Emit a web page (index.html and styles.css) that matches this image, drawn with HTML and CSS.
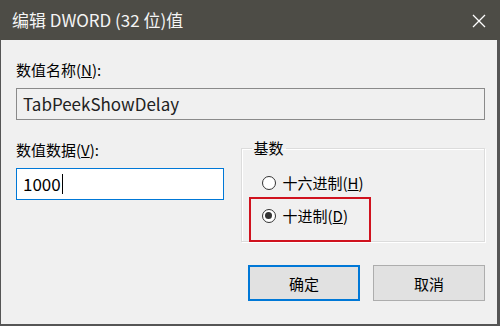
FILE: index.html
```html
<!DOCTYPE html>
<html>
	<head>
		<title>编辑 DWORD (32 位)值</title>
		<meta charset="utf-8">
		<link rel="stylesheet" href="styles.css">
	</head>
	<body>
	<div class="window">
		<div class="titlebar">
			<span class="title">编辑 DWORD (32 位)值</span>
			<span class="close">
				<svg width="14" height="14" viewBox="0 0 14 14"><path d="M1 1 L13 13 M13 1 L1 13" stroke="#fff" stroke-width="1.3" fill="none"/></svg>
			</span>
		</div>
		<div class="content">
			<div class="label">数值名称(<u>N</u>):</div>
			<div class="field readonly">TabPeekShowDelay</div>
			<div class="row">
				<div class="col-left">
					<div class="label">数值数据(<u>V</u>):</div>
					<div class="field focused">1000<span class="caret"></span></div>
				</div>
				<fieldset class="group">
					<legend>基数</legend>
					<label class="option"><span class="radio"></span>十六进制(<u>H</u>)</label>
					<label class="option marked"><span class="radio checked"></span>十进制(<u>D</u>)</label>
				</fieldset>
			</div>
			<div class="buttons">
				<div class="button default">确定</div>
				<div class="button">取消</div>
			</div>
		</div>
	</div>
	</body>
</html>
```

FILE: styles.css
```css
body{
	margin:0;
	background-color:#f0f0f0;
	font-family:"Microsoft YaHei UI", "Noto Sans CJK SC", sans-serif;
	font-size:15px;
	color:#000;
}
.window{
	width:500px;
	height:326px;
	box-sizing:border-box;
	border-left:1px solid #555;
	border-right:3px solid #555;
	border-bottom:2px solid #555;
	background-color:#f0f0f0;
}
.titlebar{
	height:40px;
	margin-left:-1px;
	margin-right:-3px;
	background-color:#4d4c46;
	display:flex;
	align-items:center;
	justify-content:space-between;
	padding:0 14px 0 12px;
}
.title{
	color:#f4f4f4;
	font-size:17px;
	line-height:20px;
}
.close{
	display:flex;
	margin-top:1px;
}
.content{
	padding:20px 12px 0 15px;
}
.label{
	line-height:20px;
	height:20px;
	margin-bottom:8px;
}
.field{
	height:32px;
	box-sizing:border-box;
	border:1px solid #8a8a8a;
	padding:0 6px;
	font-size:17px;
	line-height:30px;
	display:flex;
	align-items:center;
}
.readonly{
	background-color:#f0f0f0;
	color:#222;
}
.focused{
	background-color:#fff;
	border-color:#0078d7;
}
.caret{
	display:inline-block;
	width:1px;
	height:20px;
	background-color:#000;
	margin-left:1px;
}
.row{
	display:flex;
	margin-top:20px;
	gap:17px;
}
.col-left{
	width:208px;
}
.group{
	margin:0;
	padding:0 0 0 7px;
	width:245px;
	height:102px;
	box-sizing:border-box;
	border:1px solid #dcdcdc;
	box-shadow:inset 1px 1px 0 #fff, 1px 1px 0 #fff;
	display:flex;
	flex-direction:column;
}
legend{
	padding:0 2px;
	margin-left:3px;
	line-height:16px;
	font-size:15px;
}
.option{
	display:flex;
	align-items:center;
	flex-shrink:0;
	height:29px;
	padding-left:13px;
	box-sizing:border-box;
	margin-top:12px;
}
.option.marked{
	margin-top:0;
	width:122px;
	height:45px;
	border:2px solid #d0121e;
	padding-left:11px;
	padding-bottom:8px;
}
.radio{
	width:14px;
	height:14px;
	box-sizing:border-box;
	border:1px solid #333;
	border-radius:50%;
	background-color:#fff;
	margin-right:7px;
	position:relative;
}
.radio.checked::after{
	content:"";
	position:absolute;
	left:2.5px;
	top:2.5px;
	width:7px;
	height:7px;
	border-radius:50%;
	background-color:#333;
}
.buttons{
	display:flex;
	justify-content:flex-end;
	gap:13px;
	margin-top:23px;
}
.button{
	width:112px;
	height:36px;
	box-sizing:border-box;
	border:1px solid #adadad;
	background-color:#e1e1e1;
	display:flex;
	align-items:center;
	justify-content:center;
}
.button.default{
	border:2px solid #0078d7;
}
```
